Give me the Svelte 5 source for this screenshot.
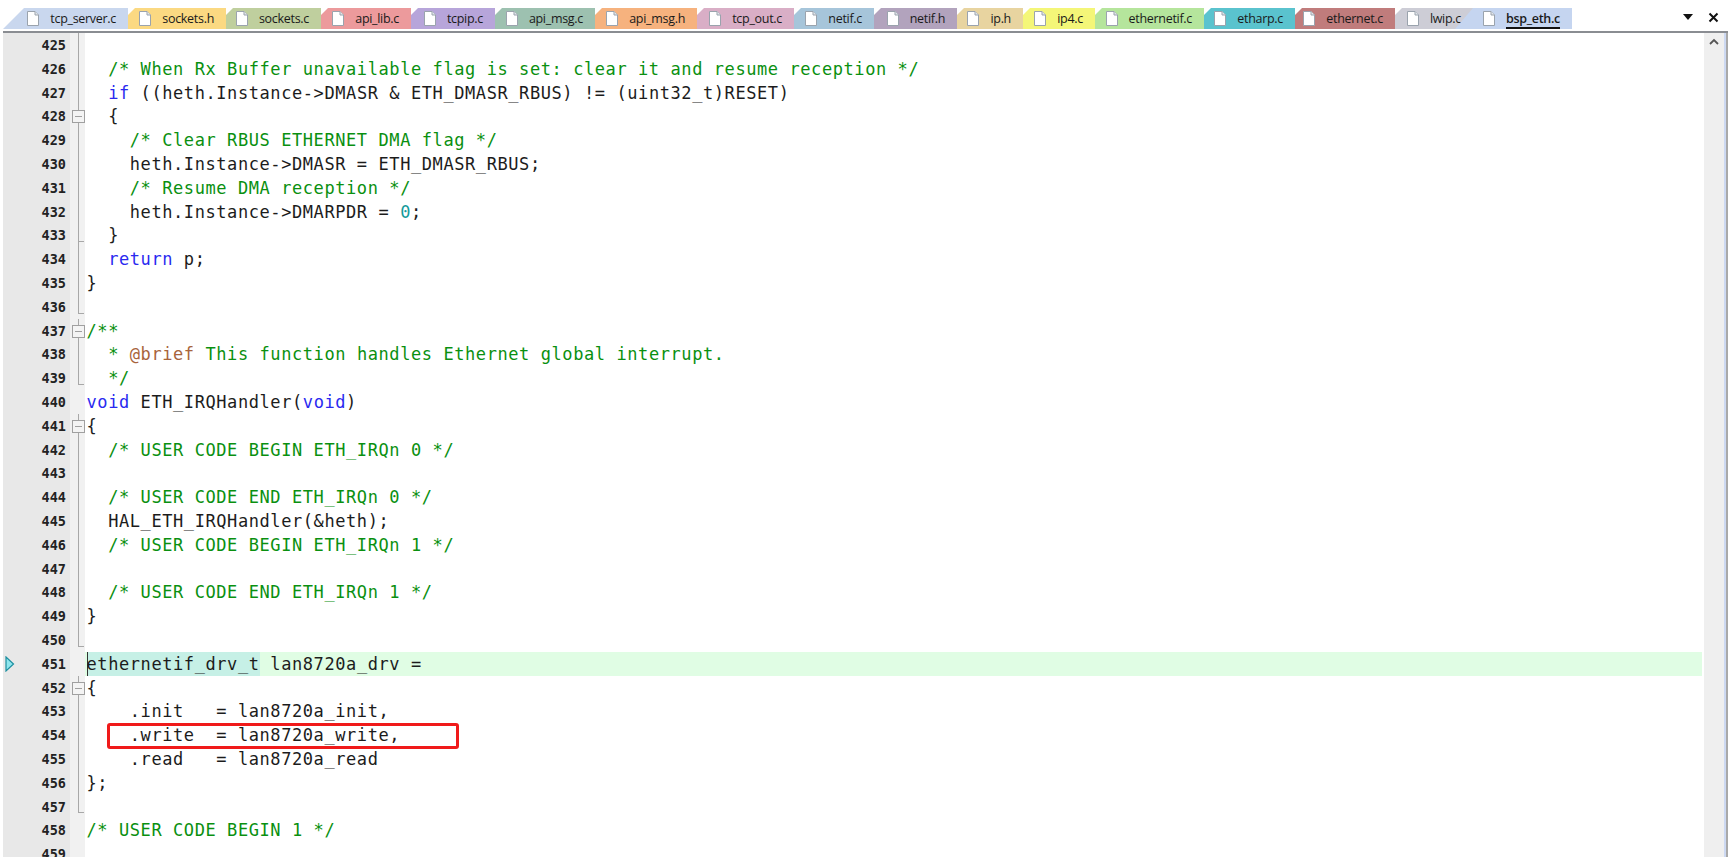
<script lang="ts">
  const tabs = [
    { name: 'tcp_server.c', color: '#c9d7ee', width: 125, wide: true },
    { name: 'sockets.h', color: '#fbd982', width: 98 },
    { name: 'sockets.c', color: '#bfcf9e', width: 95 },
    { name: 'api_lib.c', color: '#ec9a9c', width: 90 },
    { name: 'tcpip.c', color: '#b7a5da', width: 84 },
    { name: 'api_msg.c', color: '#9dc1b0', width: 100 },
    { name: 'api_msg.h', color: '#f6b27e', width: 102 },
    { name: 'tcp_out.c', color: '#d9aec6', width: 97 },
    { name: 'netif.c', color: '#a6c5da', width: 80 },
    { name: 'netif.h', color: '#b2a3bd', width: 83 },
    { name: 'ip.h', color: '#e8d4a0', width: 66 },
    { name: 'ip4.c', color: '#f4f678', width: 72 },
    { name: 'ethernetif.c', color: '#b5e59c', width: 109 },
    { name: 'etharp.c', color: '#5ac3ce', width: 91 },
    { name: 'ethernet.c', color: '#c07c7c', width: 100 },
    { name: 'lwip.c', color: '#cdcdd6', width: 78 },
    { name: 'bsp_eth.c', color: '#c5d5f0', width: 117, wide: true, active: true }
  ];

  // c = comment, k = keyword, n = number, d = doc tag, plain string = normal code
  const lines: any[] = [
    { fold: 'line' },
    { fold: 'line', code: [['c', '  /* When Rx Buffer unavailable flag is set: clear it and resume reception */']] },
    { fold: 'line', code: [['k', '  if'], ' ((heth.Instance->DMASR & ETH_DMASR_RBUS) != (uint32_t)RESET)'] },
    { fold: 'box', code: ['  {'] },
    { fold: 'line', code: [['c', '    /* Clear RBUS ETHERNET DMA flag */']] },
    { fold: 'line', code: ['    heth.Instance->DMASR = ETH_DMASR_RBUS;'] },
    { fold: 'line', code: [['c', '    /* Resume DMA reception */']] },
    { fold: 'line', code: ['    heth.Instance->DMARPDR = ', ['n', '0'], ';'] },
    { fold: 'tick', code: ['  }'] },
    { fold: 'line', code: [['k', '  return'], ' p;'] },
    { fold: 'line', code: ['}'] },
    { fold: 'end' },
    { fold: 'box', code: [['c', '/**']] },
    { fold: 'line', code: [['c', '  * '], ['d', '@brief'], ['c', ' This function handles Ethernet global interrupt.']] },
    { fold: 'end', code: [['c', '  */']] },
    { code: [['k', 'void'], ' ETH_IRQHandler(', ['k', 'void'], ')'] },
    { fold: 'box', code: ['{'] },
    { fold: 'line', code: [['c', '  /* USER CODE BEGIN ETH_IRQn 0 */']] },
    { fold: 'line' },
    { fold: 'line', code: [['c', '  /* USER CODE END ETH_IRQn 0 */']] },
    { fold: 'line', code: ['  HAL_ETH_IRQHandler(&heth);'] },
    { fold: 'line', code: [['c', '  /* USER CODE BEGIN ETH_IRQn 1 */']] },
    { fold: 'line' },
    { fold: 'line', code: [['c', '  /* USER CODE END ETH_IRQn 1 */']] },
    { fold: 'line', code: ['}'] },
    { fold: 'end' },
    { current: true, code: [['s', 'ethernetif_drv_t'], ' lan8720a_drv ='] },
    { fold: 'box', code: ['{'] },
    { fold: 'line', code: ['    .init   = lan8720a_init,'] },
    { fold: 'line', code: ['    .write  = lan8720a_write,'], boxed: true },
    { fold: 'line', code: ['    .read   = lan8720a_read'] },
    { fold: 'line', code: ['};'] },
    { fold: 'end' },
    { code: [['c', '/* USER CODE BEGIN 1 */']] },
    {}
  ];
</script>

<div class="app">
  <div class="tabbar">
    {#each tabs as tab}
      <div class="tab" class:wide={tab.wide} class:active={tab.active} style="width:{tab.width}px;background:{tab.color}">
        <svg class="file" width="12" height="15" viewBox="0 0 12 15">
          <path d="M.5.5h7.500l3.500 3.500v10.500h-11z" fill="#fff" stroke="#9aa3ad" />
          <path d="M8 .5v3.500h3.500" fill="#e4e8ec" stroke="#9aa3ad" />
        </svg>
        <span>{tab.name}</span>
      </div>
    {/each}
    <div class="tools">
      <svg width="12" height="8" viewBox="0 0 12 8"><path d="M1 1h10l-5 6z" fill="#111" /></svg>
      <svg width="11" height="11" viewBox="0 0 11 11"><path d="M1.500 1.500l8 8M9.500 1.500l-8 8" stroke="#111" stroke-width="2" /></svg>
    </div>
  </div>
  <div class="rule"></div>

  <div class="editor">
    <div class="code">
      {#each lines as line, i}
        <div class="row" class:current={line.current}>
          <div class="num">
            {#if line.current}
              <svg class="arrow" width="10" height="16" viewBox="0 0 10 16"><path d="M1 1l7.500 7-7.500 7z" fill="#8fe6ee" stroke="#1c8fa0" stroke-width="1.200" /></svg>
            {/if}
            {425 + i}
          </div>
          <div class="fold {line.fold ?? ''}"></div>
          <div class="text" class:boxed={line.boxed}>{#each line.code ?? [] as part}{#if typeof part === 'string'}{part}{:else}<span class={part[0]}>{part[1]}</span>{/if}{/each}</div>
        </div>
      {/each}
    </div>
    <div class="scroll">
      <svg width="10" height="7" viewBox="0 0 10 7"><path d="M1 6l4-4 4 4" fill="none" stroke="#555" stroke-width="1.800" /></svg>
    </div>
    <div class="edge"></div>
  </div>
</div>

<style>
  :global(body) {
    margin: 0;
    background: #fff;
  }

  .app {
    width: 1728px;
    height: 864px;
    overflow: hidden;
    background: #fff;
    display: flex;
    flex-direction: column;
  }

  .tabbar {
    height: 21px;
    padding: 8px 0 0 3px;
    display: flex;
    flex-shrink: 0;
  }

  .tab {
    height: 21px;
    box-sizing: border-box;
    padding-right: 12px;
    display: flex;
    align-items: center;
    justify-content: flex-end;
    gap: 11px;
    font: 12.5px "Open Sans", sans-serif;
    letter-spacing: -0.3px;
    color: #1a1a1a;
    clip-path: polygon(7px 0, 100% 0, 100% 100%, 0 100%, 0 7px);
  }

  .tab.wide {
    clip-path: polygon(21px 0, 100% 0, 100% 100%, 0 100%);
  }

  .tab.active {
    margin-left: -18px;
    clip-path: polygon(18px 0, 100% 0, 100% 100%, 0 100%);
  }

  .tab.active span {
    font-weight: 600;
    border-bottom: 2px solid #111;
    line-height: 17px;
    margin-top: 2px;
  }

  .file {
    flex-shrink: 0;
  }

  .tools {
    margin-left: auto;
    padding-right: 9px;
    display: flex;
    align-items: center;
    gap: 14px;
    height: 18px;
  }

  .rule {
    height: 2px;
    margin: 2px 0 0 3px;
    background: #8a8d92;
    flex-shrink: 0;
  }

  .editor {
    height: 824px;
    padding-left: 3px;
    display: flex;
    overflow: hidden;
    flex-shrink: 0;
  }

  .code {
    flex: 1;
    min-width: 0;
    margin-right: 2px;
  }

  .row {
    height: 23.8px;
    display: flex;
  }

  .num {
    position: relative;
    width: 63px;
    padding-right: 4px;
    flex-shrink: 0;
    background: #e8e8e8;
    text-align: right;
    font: bold 13.500px/25.8px "DejaVu Sans Mono", monospace;
    color: #222;
  }

  .arrow {
    position: absolute;
    left: 2px;
    top: 4px;
  }

  .fold {
    position: relative;
    width: 15px;
    flex-shrink: 0;
    background: #f1f1f1;
  }

  .fold.line::before,
  .fold.box::before,
  .fold.tick::before,
  .fold.end::before {
    content: "";
    position: absolute;
    left: 8px;
    top: 0;
    bottom: 0;
    width: 1px;
    background: #a8a8a8;
  }

  .fold.tick::after,
  .fold.end::after {
    content: "";
    position: absolute;
    left: 8px;
    bottom: 5px;
    width: 6px;
    height: 1px;
    background: #a8a8a8;
  }

  .fold.end::before {
    bottom: 5px;
  }

  .fold.box::after {
    content: "";
    position: absolute;
    left: 2px;
    top: 6px;
    width: 11px;
    height: 11px;
    border: 1px solid #a0a0a0;
    background: linear-gradient(#a0a0a0, #a0a0a0) center / 7px 1px no-repeat, #f4f4f4;
  }

  .text {
    position: relative;
    flex: 1;
    padding-left: 1.500px;
    white-space: pre;
    font: 17px/25.8px "DejaVu Sans Mono", monospace;
    letter-spacing: 0.58px;
    color: #1c1c1c;
  }

  .current .text {
    background: #e0fde4;
  }

  .boxed::after {
    content: "";
    position: absolute;
    left: 22px;
    top: 0;
    width: 346px;
    height: 20px;
    border: 3px solid #f01a1a;
    border-radius: 3px;
  }

  .c { color: #0a9010; }
  .k { color: #2a2af0; }
  .n { color: #159a9a; }
  .d { color: #a8643c; }
  .s {
    display: inline-block;
    height: 23.8px;
    vertical-align: top;
    background: #c6f0e6;
    box-shadow: inset 1px 0 #333;
  }

  .scroll {
    width: 20px;
    flex-shrink: 0;
    background: #efefef;
    display: flex;
    justify-content: center;
    padding-top: 5px;
    box-sizing: border-box;
  }

  .edge {
    width: 2px;
    flex-shrink: 0;
    background: #cdd9f2;
    border-right: 2px solid #a9a9a9;
  }
</style>
